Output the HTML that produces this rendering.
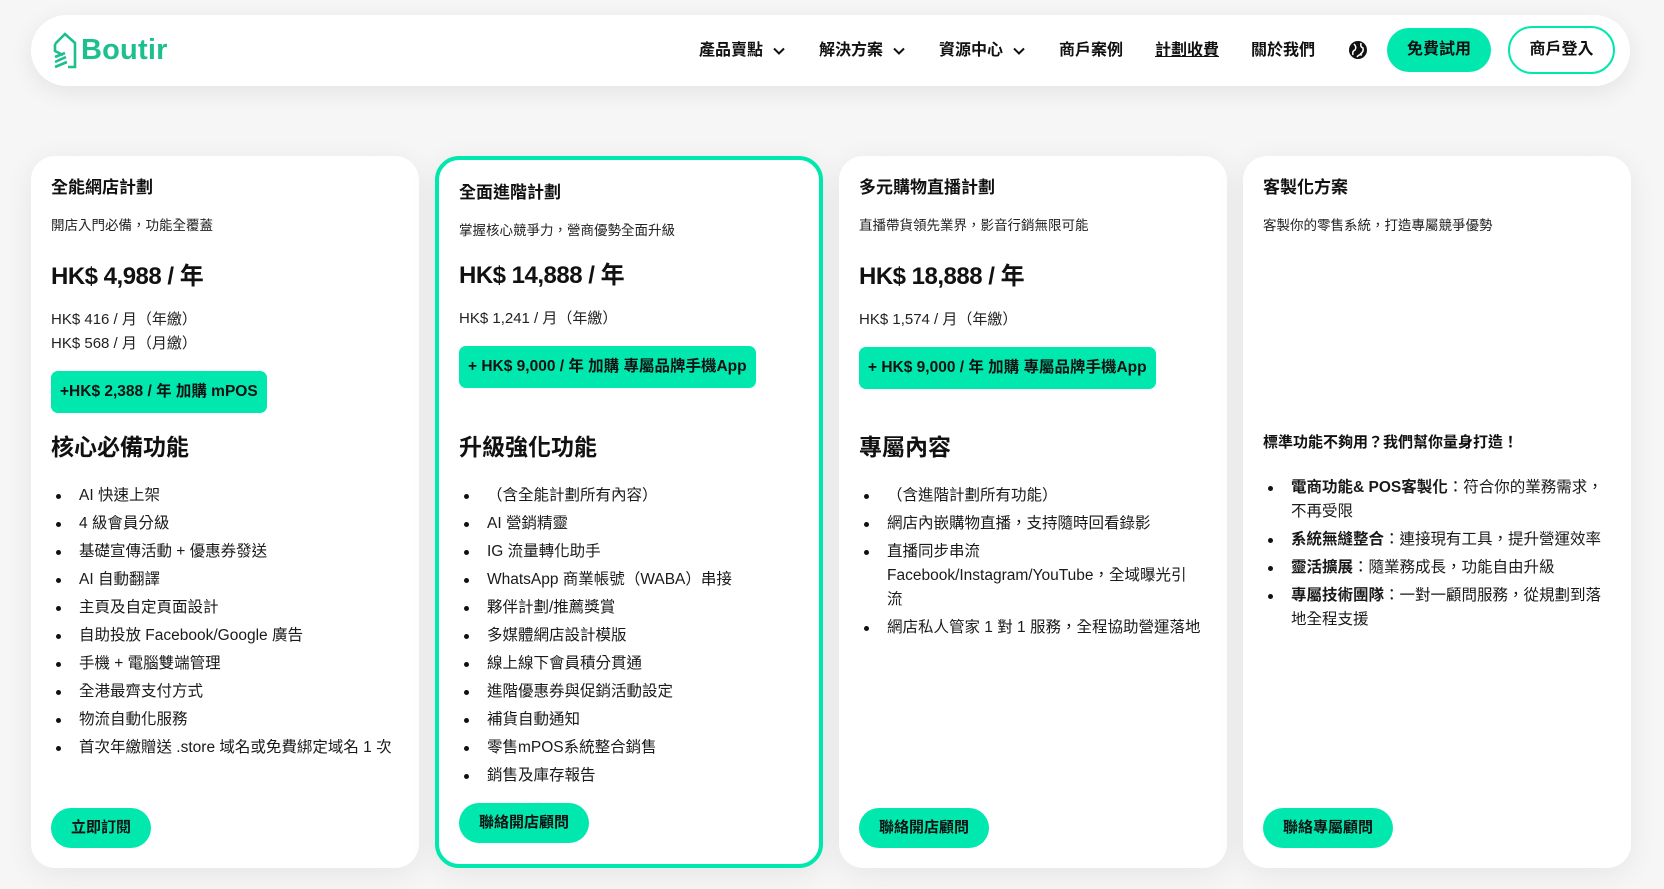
<!DOCTYPE html>
<html><head><meta charset="utf-8"><style>
*{box-sizing:border-box;margin:0;padding:0}
body{width:1664px;height:889px;overflow:hidden;background:#f6f6f6;font-family:"Liberation Sans","Noto Sans CJK TC",sans-serif;color:#111;position:relative}
.nav{position:absolute;left:31px;top:15px;width:1599px;height:71px;background:#fff;border-radius:36px;box-shadow:0 6px 24px rgba(0,0,0,.08)}
.logo{position:absolute;left:21px;top:15px;display:flex;align-items:center;color:#1dbf8f;font-size:29px;font-weight:700;letter-spacing:.2px;height:40px}
.ni{position:absolute;top:0;height:71px;line-height:71px;font-size:16px;font-weight:700;color:#111;white-space:nowrap}
.ni svg{vertical-align:middle;margin-left:10px}
.btn1{position:absolute;left:1356px;top:13px;width:104px;height:44px;border-radius:22px;background:#00e8ae;font-size:16px;font-weight:700;text-align:center;line-height:44px}
.btn2{position:absolute;left:1477px;top:11px;width:107px;height:48px;border-radius:24px;border:2px solid #00e8ae;font-size:16px;font-weight:700;text-align:center;line-height:44px}
.card{position:absolute;top:156px;width:388px;height:712px;background:#fff;border-radius:24px;box-shadow:0 6px 30px rgba(0,0,0,.07)}
.card.hl{border:4px solid #00e8ae}
.in{position:absolute;left:20px;top:20px;right:20px}
.hl .in{left:20px;top:21px}
h3{font-size:17px;font-weight:700;height:24px;line-height:24px}
.sub{font-size:13.5px;margin-top:16px;line-height:20px;color:#222}
.price{font-size:24px;font-weight:700;margin-top:25px;line-height:32px;letter-spacing:-.5px}
.mo{font-size:15px;margin-top:15px;line-height:24px;color:#222}
.add{display:inline-block;background:#00e8ae;border-radius:7px;height:42px;line-height:42px;padding:0 9px;font-size:15.5px;font-weight:700;margin-top:15px}
h2{font-size:23px;font-weight:700;line-height:32px;position:absolute;left:0;top:255px}
ul{position:absolute;left:0;top:308px;list-style:none;right:0}
li{font-size:15.5px;line-height:24px;padding-left:28px;position:relative;margin-bottom:4px;color:#1a1a1a}
li:before{content:"";position:absolute;left:5px;top:10px;width:5px;height:5px;border-radius:50%;background:#111}
.cta{position:absolute;top:632px;height:40px;line-height:40px;border-radius:20px;background:#00e8ae;font-size:15px;font-weight:700;padding:0 20px}
</style></head><body>
<div class="nav">
 <div class="logo"><svg width="26" height="38" viewBox="0 0 26 38" fill="none" stroke="#1dbf8f" stroke-width="2.6"><path d="M3 13 L13 3 L23 12 V36 H16"/><path d="M3 13 V20 L11 24"/><path d="M3 26 L13 22"/><path d="M3 31 L14 26"/><path d="M3 36 L15 31"/></svg><span style="margin-left:3px">Boutir</span></div>
 <div class="ni" style="left:668px">產品賣點<svg width="12" height="8" viewBox="0 0 12 8"><path d="M1 1.5l5 5 5-5" stroke="#111" stroke-width="2" fill="none"/></svg></div>
 <div class="ni" style="left:788px">解決方案<svg width="12" height="8" viewBox="0 0 12 8"><path d="M1 1.5l5 5 5-5" stroke="#111" stroke-width="2" fill="none"/></svg></div>
 <div class="ni" style="left:908px">資源中心<svg width="12" height="8" viewBox="0 0 12 8"><path d="M1 1.5l5 5 5-5" stroke="#111" stroke-width="2" fill="none"/></svg></div>
 <div class="ni" style="left:1028px">商戶案例</div>
 <div class="ni" style="left:1124px;text-decoration:underline">計劃收費</div>
 <div class="ni" style="left:1220px">關於我們</div>
 <svg style="position:absolute;left:1317px;top:25px" width="20" height="20" viewBox="0 0 20 20"><circle cx="10" cy="10" r="9" fill="#111"/><path d="M6 4 q3 3 1 6 q-3 1 -2 5 M13 3 q-1 4 2 5 q1 4 -3 6 M9 17 q2-3 5-2" stroke="#fff" stroke-width="1.5" fill="none"/></svg>
 <div class="btn1">免費試用</div>
 <div class="btn2">商戶登入</div>
</div>

<div class="card" style="left:31px"><div class="in">
 <h3>全能網店計劃</h3>
 <div class="sub">開店入門必備，功能全覆蓋</div>
 <div class="price">HK$ 4,988 / 年</div>
 <div class="mo">HK$ 416 / 月（年繳）<br>HK$ 568 / 月（月繳）</div>
 <div class="add">+HK$ 2,388 / 年 加購 mPOS</div>
 <h2>核心必備功能</h2>
 <ul><li>AI 快速上架</li><li>4 級會員分級</li><li>基礎宣傳活動 + 優惠券發送</li><li>AI 自動翻譯</li><li>主頁及自定頁面設計</li><li>自助投放 Facebook/Google 廣告</li><li>手機 + 電腦雙端管理</li><li>全港最齊支付方式</li><li>物流自動化服務</li><li>首次年繳贈送 .store 域名或免費綁定域名 1 次</li></ul>
 <div class="cta" style="left:0">立即訂閱</div>
</div></div>

<div class="card hl" style="left:435px"><div class="in">
 <h3>全面進階計劃</h3>
 <div class="sub">掌握核心競爭力，營商優勢全面升級</div>
 <div class="price" style="margin-top:19px">HK$ 14,888 / 年</div>
 <div class="mo">HK$ 1,241 / 月（年繳）</div>
 <div class="add" style="margin-top:15px">+ HK$ 9,000 / 年 加購 專屬品牌手機App</div>
 <h2 style="top:250px">升級強化功能</h2>
 <ul style="top:303px"><li>（含全能計劃所有內容）</li><li>AI 營銷精靈</li><li>IG 流量轉化助手</li><li>WhatsApp 商業帳號（WABA）串接</li><li>夥伴計劃/推薦獎賞</li><li>多媒體網店設計模版</li><li>線上線下會員積分貫通</li><li>進階優惠券與促銷活動設定</li><li>補貨自動通知</li><li>零售mPOS系統整合銷售</li><li>銷售及庫存報告</li></ul>
 <div class="cta" style="left:0;top:622px">聯絡開店顧問</div>
</div></div>

<div class="card" style="left:839px"><div class="in">
 <h3>多元購物直播計劃</h3>
 <div class="sub">直播帶貨領先業界，影音行銷無限可能</div>
 <div class="price">HK$ 18,888 / 年</div>
 <div class="mo">HK$ 1,574 / 月（年繳）</div>
 <div class="add" style="margin-top:15px">+ HK$ 9,000 / 年 加購 專屬品牌手機App</div>
 <h2>專屬內容</h2>
 <ul><li>（含進階計劃所有功能）</li><li>網店內嵌購物直播，支持隨時回看錄影</li><li>直播同步串流<br>Facebook/Instagram/YouTube，全域曝光引<br>流</li><li>網店私人管家 1 對 1 服務，全程協助營運落地</li></ul>
 <div class="cta" style="left:0">聯絡開店顧問</div>
</div></div>

<div class="card" style="left:1243px"><div class="in">
 <h3>客製化方案</h3>
 <div class="sub">客製你的零售系統，打造專屬競爭優勢</div>
 <div style="position:absolute;top:255px;font-size:15px;font-weight:700;line-height:24px">標準功能不夠用？我們幫你量身打造！</div>
 <ul style="top:300px"><li><b>電商功能&amp; POS客製化</b>：符合你的業務需求，<br>不再受限</li><li><b>系統無縫整合</b>：連接現有工具，提升營運效率</li><li><b>靈活擴展</b>：隨業務成長，功能自由升級</li><li><b>專屬技術團隊</b>：一對一顧問服務，從規劃到落<br>地全程支援</li></ul>
 <div class="cta" style="left:0">聯絡專屬顧問</div>
</div></div>
</body></html>
